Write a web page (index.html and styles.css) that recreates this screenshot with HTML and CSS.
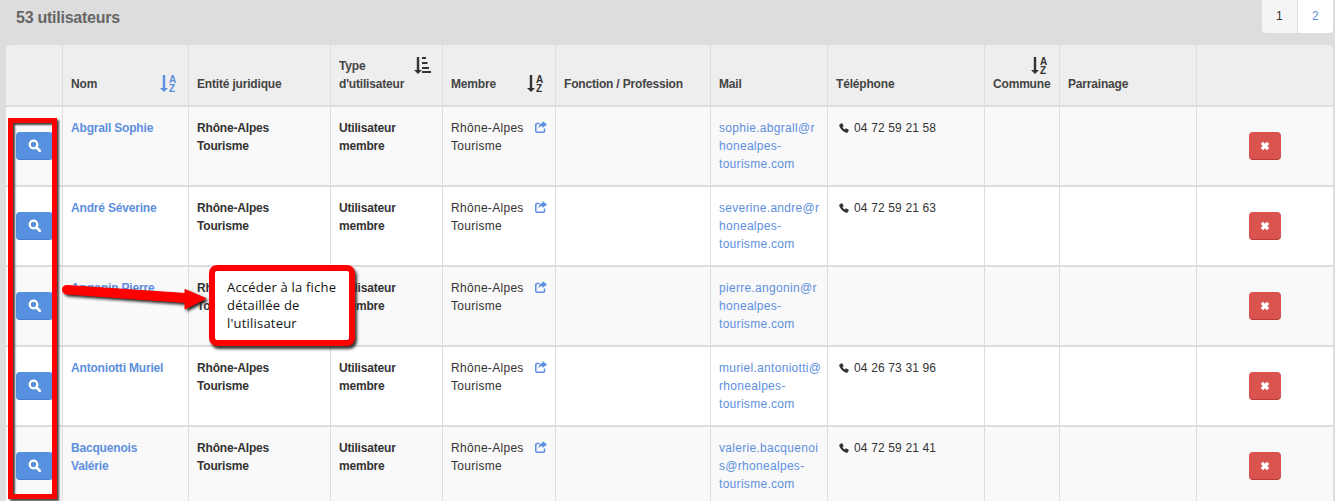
FILE: index.html
```html
<!DOCTYPE html>
<html lang="fr">
<head>
<meta charset="utf-8">
<title>Utilisateurs</title>
<link rel="stylesheet" href="styles.css">
</head>
<body>
<svg width="0" height="0" class="defs" aria-hidden="true">
  <defs>
    <symbol id="search" viewBox="0 0 13 13"><circle cx="5.500" cy="5.500" r="3.800" fill="none" stroke="currentColor" stroke-width="2.300"/><path d="M8.500 8.500L11.800 11.800" stroke="currentColor" stroke-width="2.600" stroke-linecap="round"/></symbol>
    <symbol id="times" viewBox="0 0 9 9"><path d="M1.700 1.700L7.300 7.300M7.300 1.700L1.700 7.300" stroke="currentColor" stroke-width="3"/></symbol>
    <symbol id="share" viewBox="0 0 12 12"><path d="M9.500 7.500V10.200a1 1 0 0 1-1 1H1.800a1 1 0 0 1-1-1V3.500a1 1 0 0 1 1-1h2.700" fill="none" stroke="currentColor" stroke-width="1.500"/><path d="M7.500 0L12 3.400 7.500 7V5.200C5.700 5.200 4.300 5.800 3.500 7.800 3.500 4.400 5.200 2.100 7.500 1.900Z" fill="currentColor"/></symbol>
    <symbol id="phone" viewBox="0 0 11 11"><path d="M2.700.3L.9 1.300C.1 1.800.2 3.200.8 4.500 1.900 6.900 4.100 9.100 6.500 10.200c1.300.6 2.700.7 3.200-.1l1-1.800c.2-.3.1-.7-.2-.9L8.100 6c-.3-.2-.7-.1-.9.2l-.8 1C5.300 6.600 4.400 5.700 3.800 4.600l1-.8c.3-.2.4-.6.2-.9L3.600.5C3.400.2 3 .1 2.700.3Z" fill="currentColor"/></symbol>
    <symbol id="arrow" viewBox="0 0 8 17"><path d="M2.800 0h2.400v13h2.800L4 17 0 13h2.800Z" fill="currentColor"/></symbol>
  </defs>
</svg>
<main class="page">
  <header class="topbar">
    <h1 class="title">53 utilisateurs</h1>
    <nav class="pager"><span class="page-cur">1</span><a class="page-link">2</a></nav>
  </header>
  <table class="users">
    <colgroup>
      <col class="c1"><col class="c2"><col class="c3"><col class="c4"><col class="c5"><col class="c6"><col class="c7"><col class="c8"><col class="c9"><col class="c10"><col class="c11">
    </colgroup>
    <thead>
      <tr>
        <th></th>
        <th><svg class="sort sort-blue" width="17" height="17" viewBox="0 0 17 17"><use href="#arrow" width="8" height="17"/><text x="9" y="7.500" class="az">A</text><text x="9" y="16.500" class="az">Z</text></svg>Nom</th>
        <th>Entité juridique</th>
        <th><svg class="sort" width="17" height="17" viewBox="0 0 17 17"><use href="#arrow" width="8" height="17"/><path d="M8 0h4v2H8zM8 5h5.500v2H8zM8 10h7v2H8zM8 14h9v2H8z" fill="currentColor"/></svg>Type d'utilisateur</th>
        <th><svg class="sort" width="17" height="17" viewBox="0 0 17 17"><use href="#arrow" width="8" height="17"/><text x="9" y="7.500" class="az">A</text><text x="9" y="16.500" class="az">Z</text></svg>Membre</th>
        <th>Fonction / Profession</th>
        <th>Mail</th>
        <th>Téléphone</th>
        <th><svg class="sort sort-line" width="17" height="17" viewBox="0 0 17 17"><use href="#arrow" width="8" height="17"/><text x="9" y="7.500" class="az">A</text><text x="9" y="16.500" class="az">Z</text></svg>Commune</th>
        <th>Parrainage</th>
        <th></th>
      </tr>
    </thead>
    <tbody>
      <tr>
        <td class="act"><button class="btn btn-blue"><svg width="13" height="13"><use href="#search"/></svg></button></td>
        <td class="name-cell"><a class="name">Abgrall Sophie</a></td>
        <td class="strong">Rhône-Alpes Tourisme</td>
        <td class="strong">Utilisateur membre</td>
        <td><svg class="share" width="12" height="12"><use href="#share"/></svg>Rhône-Alpes Tourisme</td>
        <td></td>
        <td class="mail-cell"><a class="mail">sophie.abgrall@r<wbr>honealpes-<wbr>tourisme.com</a></td>
        <td class="tel"><svg class="phone" width="10" height="10"><use href="#phone"/></svg>04 72 59 21 58</td>
        <td></td>
        <td></td>
        <td class="act"><button class="btn btn-red"><svg width="10" height="10"><use href="#times"/></svg></button></td>
      </tr>
      <tr>
        <td class="act"><button class="btn btn-blue"><svg width="13" height="13"><use href="#search"/></svg></button></td>
        <td class="name-cell"><a class="name">André Séverine</a></td>
        <td class="strong">Rhône-Alpes Tourisme</td>
        <td class="strong">Utilisateur membre</td>
        <td><svg class="share" width="12" height="12"><use href="#share"/></svg>Rhône-Alpes Tourisme</td>
        <td></td>
        <td class="mail-cell"><a class="mail">severine.andre@r<wbr>honealpes-<wbr>tourisme.com</a></td>
        <td class="tel"><svg class="phone" width="10" height="10"><use href="#phone"/></svg>04 72 59 21 63</td>
        <td></td>
        <td></td>
        <td class="act"><button class="btn btn-red"><svg width="10" height="10"><use href="#times"/></svg></button></td>
      </tr>
      <tr>
        <td class="act"><button class="btn btn-blue"><svg width="13" height="13"><use href="#search"/></svg></button></td>
        <td class="name-cell"><a class="name">Angonin Pierre</a></td>
        <td class="strong">Rhône-Alpes Tourisme</td>
        <td class="strong">Utilisateur membre</td>
        <td><svg class="share" width="12" height="12"><use href="#share"/></svg>Rhône-Alpes Tourisme</td>
        <td></td>
        <td class="mail-cell"><a class="mail">pierre.angonin@r<wbr>honealpes-<wbr>tourisme.com</a></td>
        <td class="tel"></td>
        <td></td>
        <td></td>
        <td class="act"><button class="btn btn-red"><svg width="10" height="10"><use href="#times"/></svg></button></td>
      </tr>
      <tr>
        <td class="act"><button class="btn btn-blue"><svg width="13" height="13"><use href="#search"/></svg></button></td>
        <td class="name-cell"><a class="name">Antoniotti Muriel</a></td>
        <td class="strong">Rhône-Alpes Tourisme</td>
        <td class="strong">Utilisateur membre</td>
        <td><svg class="share" width="12" height="12"><use href="#share"/></svg>Rhône-Alpes Tourisme</td>
        <td></td>
        <td class="mail-cell"><a class="mail">muriel.antoniotti@<wbr>rhonealpes-<wbr>tourisme.com</a></td>
        <td class="tel"><svg class="phone" width="10" height="10"><use href="#phone"/></svg>04 26 73 31 96</td>
        <td></td>
        <td></td>
        <td class="act"><button class="btn btn-red"><svg width="10" height="10"><use href="#times"/></svg></button></td>
      </tr>
      <tr>
        <td class="act"><button class="btn btn-blue"><svg width="13" height="13"><use href="#search"/></svg></button></td>
        <td class="name-cell"><a class="name">Bacquenois Valérie</a></td>
        <td class="strong">Rhône-Alpes Tourisme</td>
        <td class="strong">Utilisateur membre</td>
        <td><svg class="share" width="12" height="12"><use href="#share"/></svg>Rhône-Alpes Tourisme</td>
        <td></td>
        <td class="mail-cell"><a class="mail">valerie.bacquenoi<wbr>s@rhonealpes-<wbr>tourisme.com</a></td>
        <td class="tel"><svg class="phone" width="10" height="10"><use href="#phone"/></svg>04 72 59 21 41</td>
        <td></td>
        <td></td>
        <td class="act"><button class="btn btn-red"><svg width="10" height="10"><use href="#times"/></svg></button></td>
      </tr>
    </tbody>
  </table>
  <div class="mark-box"></div>
  <svg class="mark-arrow" width="150" height="40" viewBox="0 0 150 40">
    <path class="arrow-red" d="M7 5.500L125 13.500V9.500L146 18.500 125 29V22.500L7 14Q2.500 13.500 2.500 9.500 2.500 5.500 7 5.500Z"/>
  </svg>
  <div class="callout">Accéder à la fiche détaillée de l'utilisateur</div>
</main>
</body>
</html>
```

FILE: styles.css
```css
* { box-sizing: border-box; }
html, body { margin: 0; height: 501px; overflow: hidden; }
body { background: #ddd; font: 12px/18px "Liberation Sans", Arial, sans-serif; color: #333; letter-spacing: .3px; }
.defs { position: absolute; }
.page { position: relative; height: 501px; overflow: hidden; padding: 0 2px 0 6px; }
.topbar { display: flex; justify-content: space-between; align-items: flex-start; height: 45px; }
.title { margin: 9px 0 0 10px; font-size: 16px; line-height: 18px; font-weight: bold; color: #666; letter-spacing: -.25px; }
.pager { display: flex; height: 33px; border-radius: 0 0 4px 4px; overflow: hidden; line-height: 33px; text-align: center; }
.page-cur { width: 36px; background: #f5f5f5; border-right: 1px solid #ddd; }
.page-link { width: 35px; background: #fff; color: #5d8fe0; }
.users { width: 1327px; table-layout: fixed; border-collapse: separate; border-spacing: 0; }
.c1 { width: 57px; } .c2 { width: 126px; } .c3 { width: 142px; } .c4 { width: 112px; } .c5 { width: 113px; } .c6 { width: 155px; }
.c7 { width: 117px; } .c8 { width: 157px; } .c9 { width: 75px; } .c10 { width: 137px; } .c11 { width: 136px; }
th, td { padding: 12px 8px 10px; border-right: 1px solid #ddd; border-bottom: 2px solid #ddd; text-align: left; vertical-align: top; }
th:last-child, td:last-child { border-right: 0; }
th { height: 62px; padding: 0 8px 12px; background: #eee; vertical-align: bottom; font-weight: bold; color: #444; letter-spacing: -.18px; }
th:first-child { border-top-left-radius: 4px; }
th:last-child { border-top-right-radius: 4px; }
td { height: 80px; }
tbody tr:nth-child(odd) td { background: #f9f9f9; }
tbody tr:nth-child(even) td { background: #fff; }
.strong { font-weight: bold; letter-spacing: -.18px; }
.name-cell { padding-right: 20px; }
.name { color: #5d8fe0; font-weight: bold; letter-spacing: -.18px; }
.mail-cell { padding-right: 5px; }
.mail { color: #5d8fe0; }
.act { padding: 0; text-align: center; vertical-align: middle; }
.btn { display: inline-flex; align-items: center; justify-content: center; height: 28px; padding: 0; border: 0; border-radius: 4px; color: #fff; vertical-align: middle; }
.btn-blue { width: 37px; background: #5790df; border-bottom: 1px solid #4a80cc; margin-left: 1px; }
.btn-red { width: 32px; background: #d9534f; border-bottom: 1px solid #b83f3b; }
.sort { float: right; margin: 0 3px 0 0; color: #333; overflow: visible; }
.sort-blue { color: #5d8fe0; }
.sort-line { display: block; float: none; margin: 0 3px 1px auto; }
.az { font: bold 10px "Liberation Sans", Arial, sans-serif; fill: currentColor; letter-spacing: 0; }
.share { float: right; margin: 2px 0 0 4px; color: #5d8fe0; }
.tel { padding-left: 11px; letter-spacing: .15px; }
.phone { margin-right: 5px; vertical-align: -1px; color: #333; }
.mark-box { position: absolute; left: 8px; top: 118px; width: 49px; height: 381px; border: 5px solid #f00; box-shadow: 2px 2px 2px #444, inset 2px 2px 2px #444; }
.mark-arrow { position: absolute; left: 60px; top: 280px; filter: drop-shadow(2px 2px 1.500px #222); }
.arrow-red { fill: #f00; stroke: #f00; stroke-width: 1px; stroke-linejoin: round; }
.callout { position: absolute; left: 209px; top: 265px; width: 146px; height: 81px; padding: 7px 11px 0 12px; background: #fff; border: 6px solid #f00; border-radius: 8px; box-shadow: 2px 3px 3px #333; font: 13px/18px "Open Sans", sans-serif; color: #111; letter-spacing: .2px; }
```
